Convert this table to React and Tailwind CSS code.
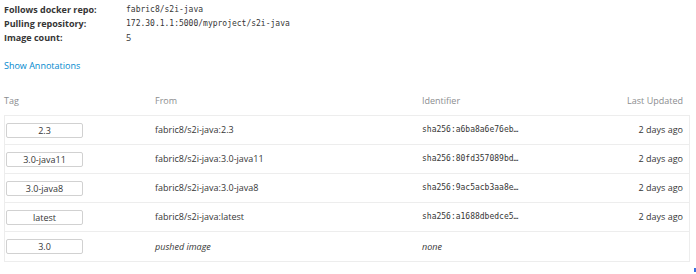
import React from "react";

const rows = [
  { tag: "2.3", from: "fabric8/s2i-java:2.3", id: "sha256:a6ba8a6e76eb…", updated: "2 days ago" },
  { tag: "3.0-java11", from: "fabric8/s2i-java:3.0-java11", id: "sha256:80fd357089bd…", updated: "2 days ago" },
  { tag: "3.0-java8", from: "fabric8/s2i-java:3.0-java8", id: "sha256:9ac5acb3aa8e…", updated: "2 days ago" },
  { tag: "latest", from: "fabric8/s2i-java:latest", id: "sha256:a1688dbedce5…", updated: "2 days ago" },
  { tag: "3.0", pushed: true },
];

const mono = { fontFamily: '"DejaVu Sans Mono", monospace' };

export default function App() {
  return (
    <div
      className="relative w-[696px] h-[274px] bg-white overflow-hidden pl-[4px] pt-[3px] text-[9px] leading-[14px] text-[#363636]"
      style={{ fontFamily: '"Open Sans", sans-serif' }}
    >
      {/* repo details */}
      <div className="flex">
        <div className="w-[122px] font-bold">Follows docker repo:</div>
        <div className="font-['DejaVu_Sans_Mono',monospace] text-[8px]">fabric8/s2i-java</div>
      </div>
      <div className="flex">
        <div className="w-[122px] font-bold">Pulling repository:</div>
        <div className="font-['DejaVu_Sans_Mono',monospace] text-[8px]">172.30.1.1:5000/myproject/s2i-java</div>
      </div>
      <div className="flex">
        <div className="w-[122px] font-bold">Image count:</div>
        <div>5</div>
      </div>

      <div className="mt-[14px] text-[#0088ce]">Show Annotations</div>

      {/* tags table */}
      <div className="mt-[13px] w-[686px]">
        <div className="grid grid-cols-[151px_267px_1fr_auto] items-center h-[29px] pr-[7px] text-[#8b8d8f]">
          <div>Tag</div>
          <div>From</div>
          <div>Identifier</div>
          <div className="text-right">Last Updated</div>
        </div>
        <div className="border border-[#ededed]">
          {rows.map((r, i) => (
            <div
              key={r.tag}
              className={
                "grid grid-cols-[150px_267px_1fr_auto] items-center h-[29px] pr-[6px] " +
                (i < rows.length - 1 ? "border-b border-[#ededed]" : "")
              }
            >
              <div className="pl-[1px]">
                <div className="w-[77px] h-[15px] border border-[#d1d1d1] rounded-[2px] flex items-center justify-center leading-none">
                  {r.tag}
                </div>
              </div>
              {r.pushed ? (
                <>
                  <div className="italic">pushed image</div>
                  <div className="italic">none</div>
                  <div />
                </>
              ) : (
                <>
                  <div>{r.from}</div>
                  <div className="text-[8px]" style={mono}>{r.id}</div>
                  <div className="text-right">{r.updated}</div>
                </>
              )}
            </div>
          ))}
        </div>
      </div>

      <div className="absolute left-[694px] top-[268px] w-[2px] h-[4px] bg-[#3b6fe0]" />
    </div>
  );
}
